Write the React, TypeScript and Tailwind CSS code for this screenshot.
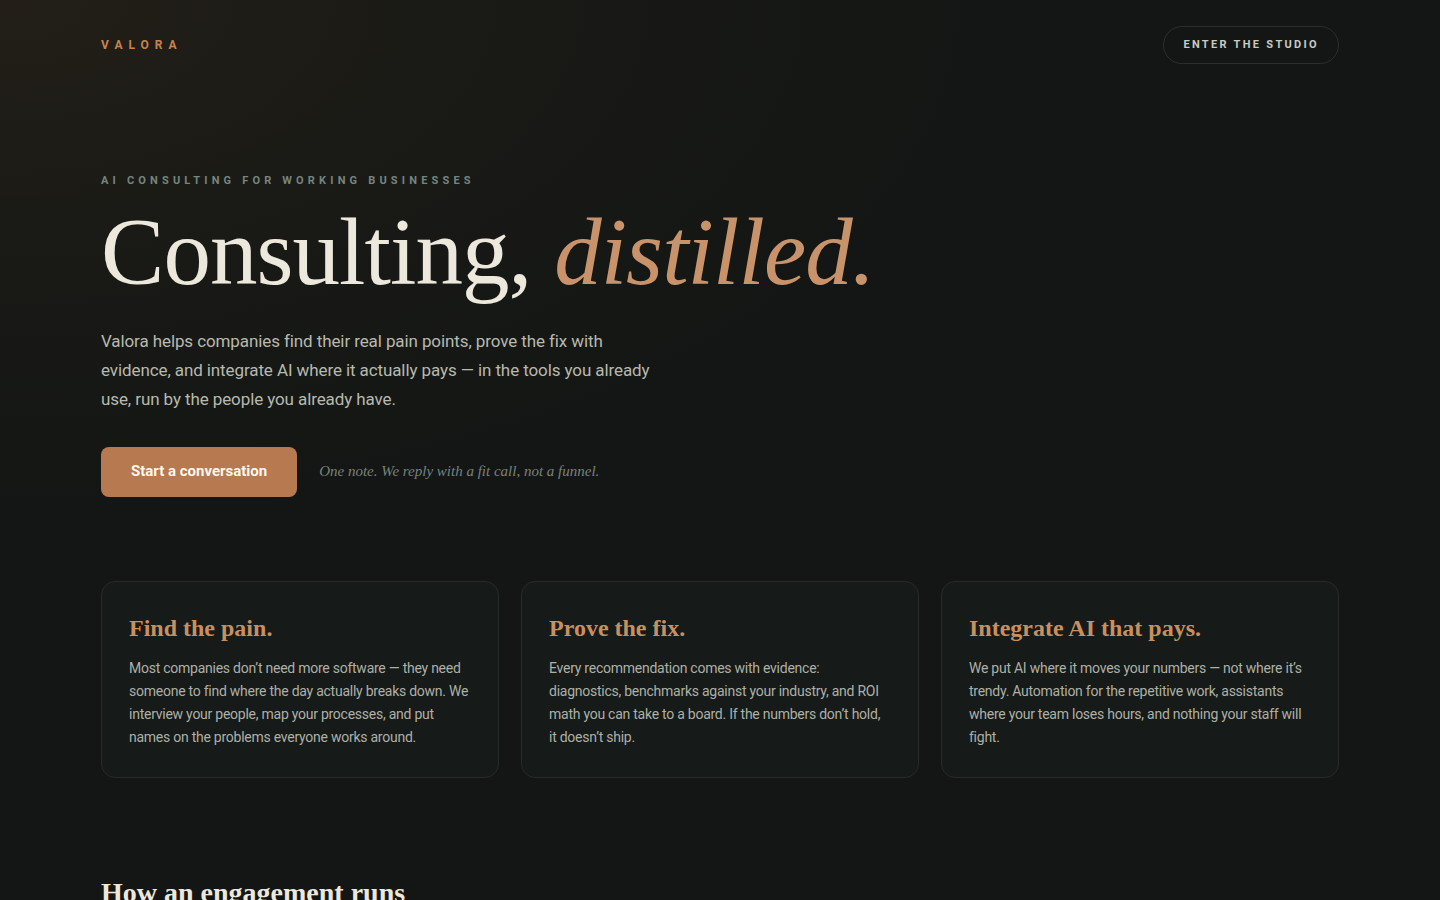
const sans = "font-['Roboto','Liberation_Sans',sans-serif]";
const serif = "font-['Liberation_Serif','DejaVu_Serif',serif]";

type Pillar = { title: string; body: string };

const pillars: Pillar[] = [
  {
    title: "Find the pain.",
    body: "Most companies don’t need more software — they need someone to find where the day actually breaks down. We interview your people, map your processes, and put names on the problems everyone works around.",
  },
  {
    title: "Prove the fix.",
    body: "Every recommendation comes with evidence: diagnostics, benchmarks against your industry, and ROI math you can take to a board. If the numbers don’t hold, it doesn’t ship.",
  },
  {
    title: "Integrate AI that pays.",
    body: "We put AI where it moves your numbers — not where it’s trendy. Automation for the repetitive work, assistants where your team loses hours, and nothing your staff will fight.",
  },
];

function PillarCard({ p }: { p: Pillar }) {
  return (
    <div className="rounded-[14px] border border-[#262b28] bg-[#161a18] pl-[27px] pr-[28px] pt-[31px] pb-[28px]">
      <h3 className={`${serif} text-[24px] leading-[30px] font-bold text-[#c8905f]`}>
        {p.title}
      </h3>
      <p className={`${sans} mt-[14px] text-[14px] leading-[23px] tracking-[-0.25px] text-[#adb0a7]`}>
        {p.body}
      </p>
    </div>
  );
}

export default function App() {
  return (
    <div className="min-h-screen bg-[#131614] bg-[radial-gradient(ellipse_1000px_520px_at_0%_0%,#231f18_0%,#1a1a16_45%,#131614_100%)] text-[#ebe6da]">
      <div className="mx-auto w-[1238px]">
        <header className="flex h-[90px] items-center justify-between">
          <span className={`${sans} text-[12px] font-bold tracking-[0.5em] text-[#c8824f]`}>
            VALORA
          </span>
          <button className={`${sans} h-[38px] rounded-full border border-[#2a2f2c] px-[19px] text-[11px] font-bold tracking-[0.21em] text-[#c6ccc4]`}>
            ENTER THE STUDIO
          </button>
        </header>

        <section className="pt-[83px]">
          <p className={`${sans} text-[11px] font-bold tracking-[0.38em] text-[#768580]`}>
            AI CONSULTING FOR WORKING BUSINESSES
          </p>
          <h1 className={`${serif} mt-[7px] text-[95px] leading-[110px] tracking-[-0.01em] text-[#ede8dc]`}>
            Consulting, <em className="italic text-[#c8936a]">distilled.</em>
          </h1>
          <p className={`${sans} mt-[20px] max-w-[560px] text-[17px] leading-[29px] tracking-[-0.1px] text-[#b7b9af]`}>
            Valora helps companies find their real pain points, prove the fix with evidence, and integrate AI where it actually pays — in the tools you already use, run by the people you already have.
          </p>
          <div className="mt-[33px] flex items-center gap-[22px]">
            <button className={`${sans} h-[50px] rounded-[8px] bg-[#b77a50] px-[30px] text-[15px] font-bold text-[#fbf6ee]`}>
              Start a conversation
            </button>
            <span className={`${serif} text-[15px] italic text-[#77827d]`}>
              One note. We reply with a fit call, not a funnel.
            </span>
          </div>
        </section>

        <section className="mt-[84px] grid grid-cols-3 gap-[22px]">
          {pillars.map((p) => (
            <PillarCard key={p.title} p={p} />
          ))}
        </section>

        <section className="pt-[98px] pb-[60px]">
          <h2 className={`${serif} text-[28px] leading-[34px] font-bold text-[#ede8dc]`}>
            How an engagement runs
          </h2>
        </section>
      </div>
    </div>
  );
}
